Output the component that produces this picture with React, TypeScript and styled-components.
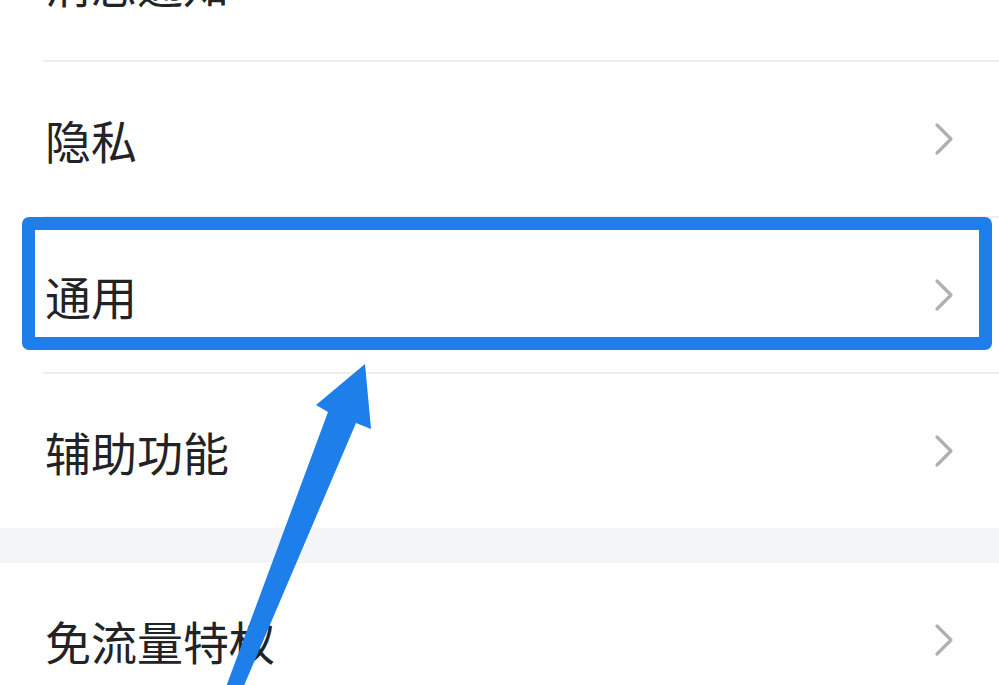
import styled, { createGlobalStyle } from 'styled-components'

const GlobalStyle = createGlobalStyle`
  html, body {
    margin: 0;
    padding: 0;
    background: #ffffff;
    overflow: hidden;
  }
  body {
    font-family: 'Noto Sans CJK SC', 'Noto Sans', sans-serif;
  }
`

const Page = styled.div`
  position: relative;
  width: 999px;
  height: 685px;
  overflow: hidden;
  background: #ffffff;
`

const List = styled.div`
  display: flex;
  flex-direction: column;
  margin-top: -94px;
`

const Row = styled.div`
  position: relative;
  display: flex;
  align-items: center;
  justify-content: space-between;
  height: 154px;
  padding: 0 44px 0 45px;
  box-sizing: border-box;
`

const RowDivider = styled.div`
  height: 2px;
  margin-left: 43px;
  background: #eeeef0;
`

const Label = styled.span`
  font-size: 46px;
  line-height: 1;
  color: #222326;
`

const ChevronBox = styled.span`
  display: flex;
  width: 22px;
  height: 34px;
  flex-shrink: 0;
`

const Gap = styled.div`
  height: 35px;
  background: #f4f5f7;
`

const Highlight = styled.div`
  position: absolute;
  top: -1px;
  left: 22px;
  right: 7px;
  bottom: 22px;
  border: 13px solid #1f7fea;
  border-radius: 7px;
  box-sizing: border-box;
  pointer-events: none;
`

const ArrowLayer = styled.svg`
  position: absolute;
  left: 0;
  top: 0;
  width: 999px;
  height: 685px;
  pointer-events: none;
`

const Chevron = () => (
  <ChevronBox>
    <svg viewBox="0 0 22 34" width="22" height="34" fill="none">
      <path
        d="M4 3 L18 17 L4 31"
        stroke="#b0b0b4"
        strokeWidth="3.2"
        strokeLinecap="round"
        strokeLinejoin="round"
      />
    </svg>
  </ChevronBox>
)

const items = [
  { label: '消息通知' },
  { label: '隐私' },
  { label: '通用', marked: true },
  { label: '辅助功能', last: true },
]

export default function App() {
  return (
    <Page>
      <GlobalStyle />
      <List>
        {items.map((item) => (
          <div key={item.label}>
            <Row>
              <Label>{item.label}</Label>
              <Chevron />
              {item.marked && <Highlight />}
            </Row>
            {!item.last && <RowDivider />}
          </div>
        ))}
        <Gap />
        <Row>
          <Label>免流量特权</Label>
          <Chevron />
        </Row>
      </List>
      <ArrowLayer viewBox="0 0 999 685">
        <path
          d="M365 364 L371 429 L356 423 L240 695 L223 695 L328 412 L316 405 Z"
          fill="#1f7fea"
        />
      </ArrowLayer>
    </Page>
  )
}
